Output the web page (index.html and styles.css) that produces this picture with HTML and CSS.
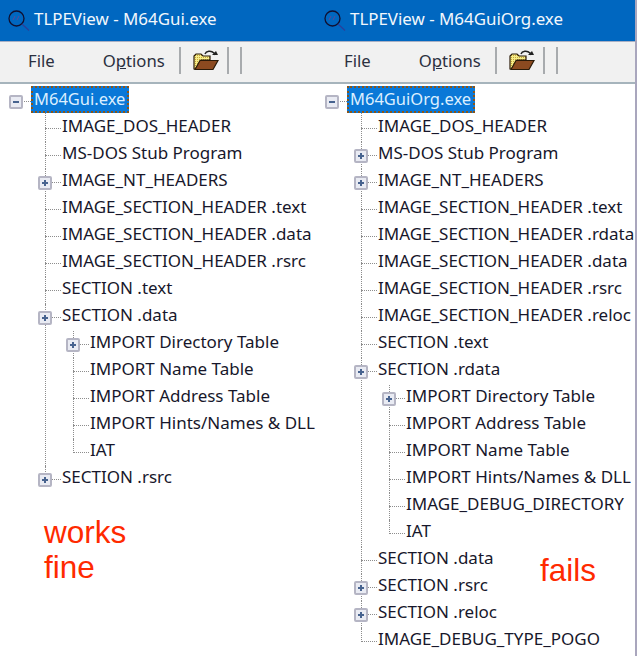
FILE: index.html
```html
<!DOCTYPE html>
<html lang="en">
<head>
<meta charset="utf-8">
<title>TLPEView comparison</title>
<link rel="stylesheet" href="styles.css">
</head>
<body>
<svg class="defs" width="0" height="0" aria-hidden="true">
  <defs>
    <pattern id="dots" width="2" height="2" patternUnits="userSpaceOnUse">
      <rect width="2" height="2" fill="#f6ee8a"/>
      <rect width="1" height="1" fill="#c9a53a"/>
    </pattern>
    <symbol id="lens" viewBox="0 0 32 32">
      <circle cx="15.500" cy="15.500" r="7.500" fill="none" stroke="#101030" stroke-width="1.300"/>
      <path d="M21 21l7 6.500" stroke="#2a3f9a" stroke-width="1.200" fill="none"/>
      <path d="M12 17l2-4M16 17l2-4" stroke="#5a4a9a" stroke-width="1" fill="none"/>
    </symbol>
    <symbol id="folder" viewBox="0 0 26 22">
      <path d="M1 20V7l2-2h5l2 2h7v4H8L3 20z" fill="url(#dots)" stroke="#2a1a08" stroke-width="1.200"/>
      <path d="M2 20.500l5-9h18l-5 9z" fill="#8c4a20" stroke="#2a1a08" stroke-width="1.200"/>
      <path d="M12 5c1-3 6-4 9-1l1 2" fill="none" stroke="#222" stroke-width="1.400"/>
      <path d="M19 6h6l-2-4z" fill="#222"/>
    </symbol>
  </defs>
</svg>
<main class="screen">
  <section class="pane">
    <header class="titlebar">
      <svg class="lens" width="32" height="32"><use href="#lens"/></svg>
      <span>TLPEView - M64Gui.exe</span>
    </header>
    <nav class="toolbar">
      <span class="menu menu-file">File</span>
      <span class="menu menu-options">O<u>p</u>tions</span>
      <i class="sep"></i>
      <svg class="folder" width="26" height="22"><use href="#folder"/></svg>
      <i class="sep sep-a"></i>
      <i class="sep sep-b"></i>
    </nav>
    <div class="tree">
      <ul class="root">
        <li>
          <div class="row"><b class="toggle minus"></b><i class="stub stub-root"></i><span class="selected">M64Gui.exe</span></div>
          <ul class="children">
            <li><div class="row"><i class="stub"></i><span class="label">IMAGE_DOS_HEADER</span></div></li>
            <li><div class="row"><i class="stub"></i><span class="label">MS-DOS Stub Program</span></div></li>
            <li><div class="row"><b class="toggle"></b><i class="stub"></i><span class="label">IMAGE_NT_HEADERS</span></div></li>
            <li><div class="row"><i class="stub"></i><span class="label">IMAGE_SECTION_HEADER .text</span></div></li>
            <li><div class="row"><i class="stub"></i><span class="label">IMAGE_SECTION_HEADER .data</span></div></li>
            <li><div class="row"><i class="stub"></i><span class="label">IMAGE_SECTION_HEADER .rsrc</span></div></li>
            <li><div class="row"><i class="stub"></i><span class="label">SECTION .text</span></div></li>
            <li>
              <div class="row"><b class="toggle"></b><i class="stub"></i><span class="label">SECTION .data</span></div>
              <ul class="children nested">
                <li><div class="row"><b class="toggle"></b><i class="stub"></i><span class="label">IMPORT Directory Table</span></div></li>
                <li><div class="row"><i class="stub"></i><span class="label">IMPORT Name Table</span></div></li>
                <li><div class="row"><i class="stub"></i><span class="label">IMPORT Address Table</span></div></li>
                <li><div class="row"><i class="stub"></i><span class="label">IMPORT Hints/Names &amp; DLL</span></div></li>
                <li><div class="row"><i class="stub"></i><span class="label">IAT</span></div></li>
              </ul>
            </li>
            <li><div class="row"><b class="toggle"></b><i class="stub"></i><span class="label">SECTION .rsrc</span></div></li>
          </ul>
        </li>
      </ul>
      <p class="note note-works">works<br>fine</p>
    </div>
  </section>
  <section class="pane pane-right">
    <header class="titlebar">
      <svg class="lens" width="32" height="32"><use href="#lens"/></svg>
      <span>TLPEView - M64GuiOrg.exe</span>
    </header>
    <nav class="toolbar">
      <span class="menu menu-file">File</span>
      <span class="menu menu-options">O<u>p</u>tions</span>
      <i class="sep"></i>
      <svg class="folder" width="26" height="22"><use href="#folder"/></svg>
      <i class="sep sep-a"></i>
      <i class="sep sep-b"></i>
    </nav>
    <div class="tree">
      <ul class="root">
        <li>
          <div class="row"><b class="toggle minus"></b><i class="stub stub-root"></i><span class="selected">M64GuiOrg.exe</span></div>
          <ul class="children">
            <li><div class="row"><i class="stub"></i><span class="label">IMAGE_DOS_HEADER</span></div></li>
            <li><div class="row"><b class="toggle"></b><i class="stub"></i><span class="label">MS-DOS Stub Program</span></div></li>
            <li><div class="row"><b class="toggle"></b><i class="stub"></i><span class="label">IMAGE_NT_HEADERS</span></div></li>
            <li><div class="row"><i class="stub"></i><span class="label">IMAGE_SECTION_HEADER .text</span></div></li>
            <li><div class="row"><i class="stub"></i><span class="label">IMAGE_SECTION_HEADER .rdata</span></div></li>
            <li><div class="row"><i class="stub"></i><span class="label">IMAGE_SECTION_HEADER .data</span></div></li>
            <li><div class="row"><i class="stub"></i><span class="label">IMAGE_SECTION_HEADER .rsrc</span></div></li>
            <li><div class="row"><i class="stub"></i><span class="label">IMAGE_SECTION_HEADER .reloc</span></div></li>
            <li><div class="row"><i class="stub"></i><span class="label">SECTION .text</span></div></li>
            <li>
              <div class="row"><b class="toggle"></b><i class="stub"></i><span class="label">SECTION .rdata</span></div>
              <ul class="children nested">
                <li><div class="row"><b class="toggle"></b><i class="stub"></i><span class="label">IMPORT Directory Table</span></div></li>
                <li><div class="row"><i class="stub"></i><span class="label">IMPORT Address Table</span></div></li>
                <li><div class="row"><i class="stub"></i><span class="label">IMPORT Name Table</span></div></li>
                <li><div class="row"><i class="stub"></i><span class="label">IMPORT Hints/Names &amp; DLL</span></div></li>
                <li><div class="row"><i class="stub"></i><span class="label">IMAGE_DEBUG_DIRECTORY</span></div></li>
                <li><div class="row"><i class="stub"></i><span class="label">IAT</span></div></li>
              </ul>
            </li>
            <li><div class="row"><i class="stub"></i><span class="label">SECTION .data</span></div></li>
            <li><div class="row"><b class="toggle"></b><i class="stub"></i><span class="label">SECTION .rsrc</span></div></li>
            <li><div class="row"><b class="toggle"></b><i class="stub"></i><span class="label">SECTION .reloc</span></div></li>
            <li><div class="row"><i class="stub"></i><span class="label">IMAGE_DEBUG_TYPE_POGO</span></div></li>
          </ul>
        </li>
      </ul>
      <p class="note note-fails">fails</p>
    </div>
  </section>
</main>
</body>
</html>
```

FILE: styles.css
```css
* { box-sizing: border-box; }
html, body { margin: 0; height: 100%; background: #fff; overflow: hidden; }
.defs { position: absolute; }
.screen {
  display: grid;
  grid-template-columns: 316px 321px;
  width: 637px;
  height: 656px;
  font-family: "Noto Sans", sans-serif;
}
.pane { display: flex; flex-direction: column; min-width: 0; height: 656px; }
.pane-right { border-right: 2px solid #a9a6bd; }

.titlebar {
  display: flex;
  align-items: center;
  flex: 0 0 41px;
  padding: 0 0 4px 0;
  background: #0067c0;
  color: #f2f7fc;
  font-size: 16.9px;
  white-space: nowrap;
}
.lens { display: block; flex: none; margin-left: 1px; margin-right: 1px; }

.toolbar {
  display: flex;
  align-items: center;
  flex: 0 0 43px;
  padding: 0 0 4px 28px;
  background: #f1f1f1;
  border-top: 1px solid #a9b0c4;
  border-bottom: 2px solid #a6b4bc;
  color: #2b3040;
  font-size: 16.7px;
}
.menu { white-space: nowrap; }
.menu-options { margin-left: 48px; }
.sep { display: block; width: 2px; height: 27px; background: #a8abae; margin-left: 14px; }
.sep-a { margin-left: 8px; }
.sep-b { margin-left: 11px; }
.folder { display: block; flex: none; margin-left: 12px; }

.tree { position: relative; flex: 1; min-height: 0; padding-top: 4px; background: #fff; }
.tree ul { list-style: none; margin: 0; padding: 0; }
.root { margin-left: 16px !important; }
.children { margin-left: 29px !important; }
.nested { margin-left: 28px !important; }
.children > li { position: relative; }
.children > li::before {
  content: "";
  position: absolute;
  left: 0;
  top: 0;
  bottom: 0;
  border-left: 1px dotted #8d8d8d;
}
.children > li:last-child::before { bottom: auto; height: 14px; }
.children:not(.nested) > li:first-child::before { top: -2px; }

.row { position: relative; display: flex; align-items: center; height: 27px; }
.stub { display: block; flex: none; width: 16px; margin-right: 1px; border-top: 1px dotted #8d8d8d; }
.stub-root { width: 15px; margin-right: 0; }
.label, .selected {
  margin-bottom: 6px;
  line-height: 27px;
  font-size: 17px;
  color: #17172b;
  white-space: nowrap;
}
.selected {
  margin-bottom: 4px;
  height: 27px;
  padding: 0 2px 0 1px;
  border: 2px dotted #8a5518;
  background: #0a78d7;
  background-clip: border-box;
  color: #dcefff;
  font-size: 16.5px;
  line-height: 21px;
}

.toggle {
  position: absolute;
  z-index: 1;
  left: -7px;
  top: 7px;
  width: 14px;
  height: 14px;
  border: 2px solid #b5b5c4;
  border-radius: 2px;
  background: #e9ebf3;
}
.toggle::before {
  content: "";
  position: absolute;
  left: 2px;
  right: 2px;
  top: 4px;
  height: 2px;
  background: #47638f;
}
.toggle::after {
  content: "";
  position: absolute;
  top: 2px;
  bottom: 2px;
  left: 4px;
  width: 2px;
  background: #47638f;
}
.toggle.minus::after { display: none; }

.note {
  position: absolute;
  margin: 0;
  font-family: "Liberation Sans", Arial, sans-serif;
  font-size: 31.5px;
  line-height: 35px;
  color: #ff2a00;
}
.note-works { left: 44px; top: 431px; }
.note-fails { left: 224px; top: 469px; }
```
